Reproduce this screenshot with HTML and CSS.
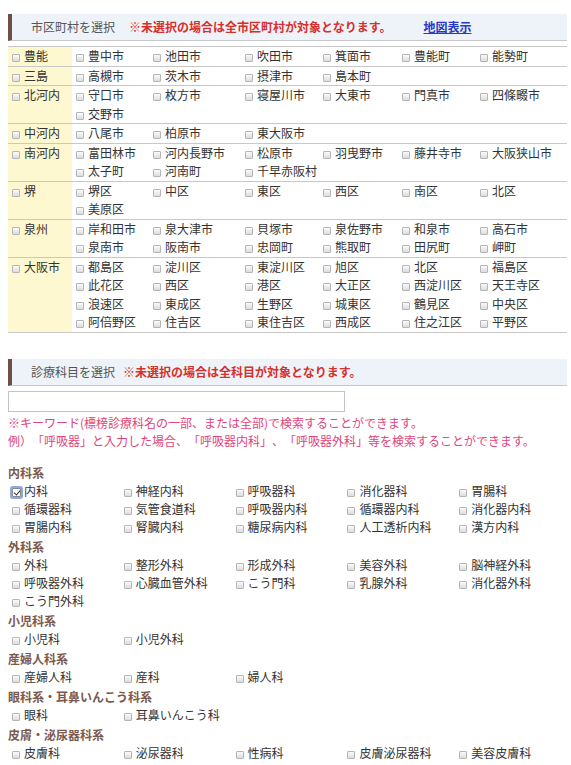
FILE: index.html
```html
<!DOCTYPE html>
<html lang="ja">
<head>
    <meta charset="UTF-8">
    <meta name="viewport" content="width=device-width, initial-scale=1.0">
    <title>病院・診療所を探す</title>
    <link rel="stylesheet" href="styles.css">
</head>
<body>
    <div class="search">
        <h3 class="heading">
            市区町村を選択
            <span class="note">※未選択の場合は全市区町村が対象となります。</span>
            <a href="#" class="map-link">地図表示</a>
        </h3>

        <table class="area">
            <colgroup>
                <col class="c-region">
                <col class="c1"><col class="c2"><col class="c3">
                <col class="c4"><col class="c5"><col class="c6">
            </colgroup>
            <tbody>
                <tr class="group">
                    <th><label><input type="checkbox">豊能</label></th>
                    <td><label><input type="checkbox">豊中市</label></td>
                    <td><label><input type="checkbox">池田市</label></td>
                    <td><label><input type="checkbox">吹田市</label></td>
                    <td><label><input type="checkbox">箕面市</label></td>
                    <td><label><input type="checkbox">豊能町</label></td>
                    <td><label><input type="checkbox">能勢町</label></td>
                </tr>
                <tr class="group">
                    <th><label><input type="checkbox">三島</label></th>
                    <td><label><input type="checkbox">高槻市</label></td>
                    <td><label><input type="checkbox">茨木市</label></td>
                    <td><label><input type="checkbox">摂津市</label></td>
                    <td><label><input type="checkbox">島本町</label></td>
                    <td></td>
                    <td></td>
                </tr>
                <tr class="group">
                    <th rowspan="2"><label><input type="checkbox">北河内</label></th>
                    <td><label><input type="checkbox">守口市</label></td>
                    <td><label><input type="checkbox">枚方市</label></td>
                    <td><label><input type="checkbox">寝屋川市</label></td>
                    <td><label><input type="checkbox">大東市</label></td>
                    <td><label><input type="checkbox">門真市</label></td>
                    <td><label><input type="checkbox">四條畷市</label></td>
                </tr>
                <tr>
                    <td><label><input type="checkbox">交野市</label></td>
                    <td></td><td></td><td></td><td></td><td></td>
                </tr>
                <tr class="group">
                    <th><label><input type="checkbox">中河内</label></th>
                    <td><label><input type="checkbox">八尾市</label></td>
                    <td><label><input type="checkbox">柏原市</label></td>
                    <td><label><input type="checkbox">東大阪市</label></td>
                    <td></td><td></td><td></td>
                </tr>
                <tr class="group">
                    <th rowspan="2"><label><input type="checkbox">南河内</label></th>
                    <td><label><input type="checkbox">富田林市</label></td>
                    <td><label><input type="checkbox">河内長野市</label></td>
                    <td><label><input type="checkbox">松原市</label></td>
                    <td><label><input type="checkbox">羽曳野市</label></td>
                    <td><label><input type="checkbox">藤井寺市</label></td>
                    <td><label><input type="checkbox">大阪狭山市</label></td>
                </tr>
                <tr>
                    <td><label><input type="checkbox">太子町</label></td>
                    <td><label><input type="checkbox">河南町</label></td>
                    <td><label><input type="checkbox">千早赤阪村</label></td>
                    <td></td><td></td><td></td>
                </tr>
                <tr class="group">
                    <th rowspan="2"><label><input type="checkbox">堺</label></th>
                    <td><label><input type="checkbox">堺区</label></td>
                    <td><label><input type="checkbox">中区</label></td>
                    <td><label><input type="checkbox">東区</label></td>
                    <td><label><input type="checkbox">西区</label></td>
                    <td><label><input type="checkbox">南区</label></td>
                    <td><label><input type="checkbox">北区</label></td>
                </tr>
                <tr>
                    <td><label><input type="checkbox">美原区</label></td>
                    <td></td><td></td><td></td><td></td><td></td>
                </tr>
                <tr class="group">
                    <th rowspan="2"><label><input type="checkbox">泉州</label></th>
                    <td><label><input type="checkbox">岸和田市</label></td>
                    <td><label><input type="checkbox">泉大津市</label></td>
                    <td><label><input type="checkbox">貝塚市</label></td>
                    <td><label><input type="checkbox">泉佐野市</label></td>
                    <td><label><input type="checkbox">和泉市</label></td>
                    <td><label><input type="checkbox">高石市</label></td>
                </tr>
                <tr>
                    <td><label><input type="checkbox">泉南市</label></td>
                    <td><label><input type="checkbox">阪南市</label></td>
                    <td><label><input type="checkbox">忠岡町</label></td>
                    <td><label><input type="checkbox">熊取町</label></td>
                    <td><label><input type="checkbox">田尻町</label></td>
                    <td><label><input type="checkbox">岬町</label></td>
                </tr>
                <tr class="group">
                    <th rowspan="4"><label><input type="checkbox">大阪市</label></th>
                    <td><label><input type="checkbox">都島区</label></td>
                    <td><label><input type="checkbox">淀川区</label></td>
                    <td><label><input type="checkbox">東淀川区</label></td>
                    <td><label><input type="checkbox">旭区</label></td>
                    <td><label><input type="checkbox">北区</label></td>
                    <td><label><input type="checkbox">福島区</label></td>
                </tr>
                <tr>
                    <td><label><input type="checkbox">此花区</label></td>
                    <td><label><input type="checkbox">西区</label></td>
                    <td><label><input type="checkbox">港区</label></td>
                    <td><label><input type="checkbox">大正区</label></td>
                    <td><label><input type="checkbox">西淀川区</label></td>
                    <td><label><input type="checkbox">天王寺区</label></td>
                </tr>
                <tr>
                    <td><label><input type="checkbox">浪速区</label></td>
                    <td><label><input type="checkbox">東成区</label></td>
                    <td><label><input type="checkbox">生野区</label></td>
                    <td><label><input type="checkbox">城東区</label></td>
                    <td><label><input type="checkbox">鶴見区</label></td>
                    <td><label><input type="checkbox">中央区</label></td>
                </tr>
                <tr>
                    <td><label><input type="checkbox">阿倍野区</label></td>
                    <td><label><input type="checkbox">住吉区</label></td>
                    <td><label><input type="checkbox">東住吉区</label></td>
                    <td><label><input type="checkbox">西成区</label></td>
                    <td><label><input type="checkbox">住之江区</label></td>
                    <td><label><input type="checkbox">平野区</label></td>
                </tr>
            </tbody>
        </table>

        <h3 class="heading heading-dept">
            診療科目を選択
            <span class="note">※未選択の場合は全科目が対象となります。</span>
        </h3>

        <input type="text" class="keyword">
        <p class="hint">
            ※キーワード(標榜診療科名の一部、または全部)で検索することができます。<br>
            例）「呼吸器」と入力した場合、「呼吸器内科」、「呼吸器外科」等を検索することができます。
        </p>

        <div class="dept">
            <h4>内科系</h4>
            <ul>
                <li><label><input type="checkbox" checked class="focused">内科</label></li>
                <li><label><input type="checkbox">神経内科</label></li>
                <li><label><input type="checkbox">呼吸器科</label></li>
                <li><label><input type="checkbox">消化器科</label></li>
                <li><label><input type="checkbox">胃腸科</label></li>
                <li><label><input type="checkbox">循環器科</label></li>
                <li><label><input type="checkbox">気管食道科</label></li>
                <li><label><input type="checkbox">呼吸器内科</label></li>
                <li><label><input type="checkbox">循環器内科</label></li>
                <li><label><input type="checkbox">消化器内科</label></li>
                <li><label><input type="checkbox">胃腸内科</label></li>
                <li><label><input type="checkbox">腎臓内科</label></li>
                <li><label><input type="checkbox">糖尿病内科</label></li>
                <li><label><input type="checkbox">人工透析内科</label></li>
                <li><label><input type="checkbox">漢方内科</label></li>
            </ul>

            <h4>外科系</h4>
            <ul>
                <li><label><input type="checkbox">外科</label></li>
                <li><label><input type="checkbox">整形外科</label></li>
                <li><label><input type="checkbox">形成外科</label></li>
                <li><label><input type="checkbox">美容外科</label></li>
                <li><label><input type="checkbox">脳神経外科</label></li>
                <li><label><input type="checkbox">呼吸器外科</label></li>
                <li><label><input type="checkbox">心臓血管外科</label></li>
                <li><label><input type="checkbox">こう門科</label></li>
                <li><label><input type="checkbox">乳腺外科</label></li>
                <li><label><input type="checkbox">消化器外科</label></li>
                <li><label><input type="checkbox">こう門外科</label></li>
            </ul>

            <h4>小児科系</h4>
            <ul>
                <li><label><input type="checkbox">小児科</label></li>
                <li><label><input type="checkbox">小児外科</label></li>
            </ul>

            <h4>産婦人科系</h4>
            <ul>
                <li><label><input type="checkbox">産婦人科</label></li>
                <li><label><input type="checkbox">産科</label></li>
                <li><label><input type="checkbox">婦人科</label></li>
            </ul>

            <h4>眼科系・耳鼻いんこう科系</h4>
            <ul>
                <li><label><input type="checkbox">眼科</label></li>
                <li><label><input type="checkbox">耳鼻いんこう科</label></li>
            </ul>

            <h4>皮膚・泌尿器科系</h4>
            <ul>
                <li><label><input type="checkbox">皮膚科</label></li>
                <li><label><input type="checkbox">泌尿器科</label></li>
                <li><label><input type="checkbox">性病科</label></li>
                <li><label><input type="checkbox">皮膚泌尿器科</label></li>
                <li><label><input type="checkbox">美容皮膚科</label></li>
            </ul>
        </div>
    </div>
</body>
</html>
```

FILE: styles.css
```css
body {
    margin: 0;
    padding: 14px 8px 20px;
    font-family: "Noto Sans CJK JP", "Noto Sans", sans-serif;
    font-size: 12px;
    color: #333;
    background-color: #fff;
    text-spacing-trim: space-all; /* 括弧・句読点を全角幅のままにする */
}

.search {
    width: 559px;
}

/* 見出しバー */
.heading {
    margin: 0;
    height: 26px;
    line-height: 26px;
    padding-left: 19px;
    border-left: 4px solid #6e4f45;
    border-bottom: 1px solid #c8c8c8;
    background-color: #eef3f9;
    font-size: 12px;
    font-weight: normal;
    color: #555;
    display: flex;
    align-items: center;
}

.heading .note {
    margin-left: 14px;
    color: #d6302c;
    font-weight: bold;
}

.heading .map-link {
    margin-left: 32px;
    color: #2838c8;
    font-weight: bold;
    text-decoration: underline;
}

.heading-dept {
    margin-top: 26px;
}

.heading-dept .note {
    margin-left: 8px;
}

/* チェックボックス */
input[type="checkbox"] {
    -webkit-appearance: none;
    appearance: none;
    width: 8px;
    height: 8px;
    margin: 0 4px 0 4px;
    border: 1px solid #b5b5b5;
    border-radius: 1px;
    background: linear-gradient(#fbfbfb, #dcdcdc);
    vertical-align: -1px;
    flex-shrink: 0;
}

input[type="checkbox"].focused {
    width: 9px;
    height: 9px;
    margin-right: 3px;
    background: #fff;
    border-color: #8a8a8a;
    box-shadow: 0 0 0 2px #8fa8e8;
    position: relative;
}

input[type="checkbox"].focused::after {
    content: "";
    position: absolute;
    left: 2px;
    top: 0;
    width: 3px;
    height: 5px;
    border: solid #333;
    border-width: 0 1.5px 1.5px 0;
    transform: rotate(40deg);
}

label {
    cursor: pointer;
    white-space: nowrap;
}

/* 市区町村テーブル */
.area {
    width: 559px;
    margin-top: 5px;
    border-collapse: collapse;
    table-layout: fixed;
}

.area .c-region { width: 64px; }
.area .c1 { width: 77px; }
.area .c2 { width: 92px; }
.area .c3 { width: 78px; }
.area .c4 { width: 79px; }
.area .c5 { width: 78px; }
.area .c6 { width: 91px; }

.area th,
.area td {
    height: 18.5px;
    padding: 0;
    line-height: 18px;
    text-align: left;
    vertical-align: top;
    font-weight: normal;
}

.area th {
    background-color: #fdf8cf;
}

.area tr.group > th,
.area tr.group > td {
    border-top: 1px solid #c8c8c8;
}

.area tbody {
    border-bottom: 1px solid #c8c8c8;
}

/* キーワード入力 */
.keyword {
    display: block;
    box-sizing: border-box;
    width: 337px;
    height: 21px;
    margin-top: 5px;
    border: 1px solid #c4c4c4;
    padding: 2px 4px;
    font-size: 12px;
}

.hint {
    margin: 2px 0 0;
    line-height: 18px;
    color: #e0457c;
}

/* 診療科目 */
.dept {
    margin-top: 13px;
}

.dept h4 {
    margin: 1px 0 0;
    line-height: 19px;
    font-size: 12px;
    font-weight: bold;
    color: #7b5a4e;
}

.dept ul {
    margin: 0;
    padding: 0;
    list-style: none;
    display: flex;
    flex-wrap: wrap;
}

.dept li {
    flex: 0 0 20%;
    line-height: 18px;
}
```
